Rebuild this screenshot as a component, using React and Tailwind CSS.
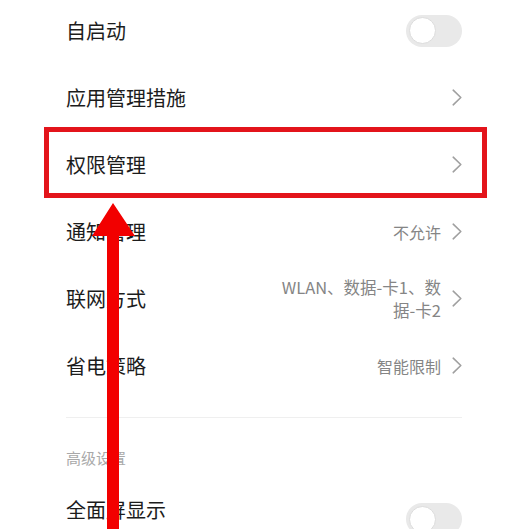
const ROWS = [
  { title: '自启动', toggle: true },
  { title: '应用管理措施' },
  { title: '权限管理' },
  { title: '通知管理', value: '不允许' },
  { title: '联网方式', value: ['WLAN、数据-卡1、数', '据-卡2'] },
  { title: '省电策略', value: '智能限制' },
];

function Chevron() {
  return (
    <svg width="10" height="17" viewBox="0 0 10 17" className="shrink-0">
      <polyline points="1.2,1.2 8.8,8.5 1.2,15.8" fill="none" stroke="#a0a0a0" strokeWidth="1.6" strokeLinecap="round" strokeLinejoin="round" />
    </svg>
  );
}

function Toggle() {
  return (
    <div className="w-[56px] h-[32px] rounded-full bg-[#e9e9e9] p-[3px] flex items-center shrink-0">
      <div className="w-[27px] h-[27px] rounded-full bg-white border border-[#dcdcdc]" />
    </div>
  );
}

function Row({ title, value, toggle }) {
  return (
    <div className="h-[67px] flex items-center justify-between">
      <span className="text-[20px] text-[#1c1c1c]">{title}</span>
      {toggle ? (
        <Toggle />
      ) : (
        <div className="flex items-center gap-[11px]">
          {Array.isArray(value) ? (
            <div className="text-right text-[16.5px] leading-[23px] text-[#858585]">
              {value.map(v => <div key={v}>{v}</div>)}
            </div>
          ) : value ? (
            <span className="text-[16px] text-[#858585]">{value}</span>
          ) : null}
          <Chevron />
        </div>
      )}
    </div>
  );
}

export default function App() {
  return (
    <div
      className="relative w-[530px] h-[529px] overflow-hidden bg-white"
      style={{ fontFamily: '"Noto Sans CJK SC", "Noto Sans", sans-serif' }}
    >
      <div className="pl-[66px] pr-[68px] -mt-[3px]">
        {ROWS.map(r => <Row key={r.title} {...r} />)}

        <div className="mt-[18px] border-t border-[#efefef]" />

        <div className="mt-[30px] text-[15px] leading-[20px] text-[#a9a9a9]">高级设置</div>

        <div className="mt-[29px] flex items-start justify-between">
          <div>
            <div className="text-[20px] leading-[26px] text-[#1c1c1c]">全面屏显示</div>
            <div className="mt-[4px] text-[15px] leading-[20px] text-[#8a8a8a]">以全面屏比例显示内容</div>
          </div>
          <div className="mt-[6px]"><Toggle /></div>
        </div>
      </div>

      {/* annotation */}
      <div className="absolute left-[44px] top-[127px] w-[443px] h-[71px] border-[5px] border-[#e3141b]" />
      <svg className="absolute left-[92px] top-[203px]" width="44" height="330" viewBox="0 0 44 330">
        <polygon points="21,0 0,33 15,33 15,330 27,330 27,33 43,33" fill="#f20000" />
      </svg>
    </div>
  );
}
